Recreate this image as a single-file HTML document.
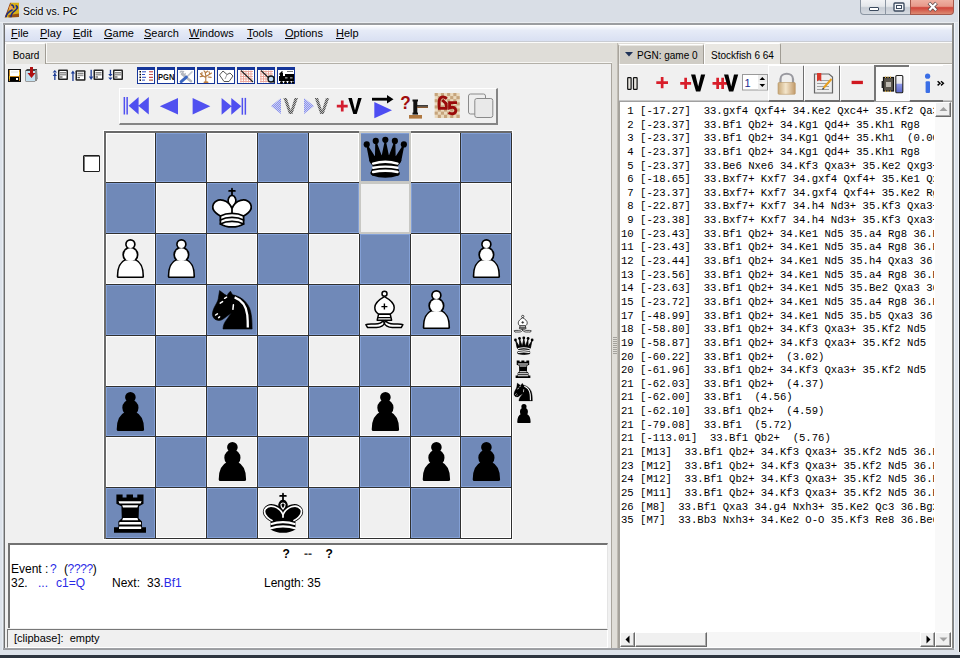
<!DOCTYPE html>
<html><head><meta charset="utf-8">
<style>
*{margin:0;padding:0;box-sizing:border-box}
html,body{width:960px;height:658px;overflow:hidden}
body{position:relative;background:#dde3eb;font-family:"Liberation Sans",sans-serif;font-size:11px;color:#000}
.a{position:absolute}
.pre{white-space:pre}
#title{left:0;top:0;width:960px;height:22px;background:#d9dee6}
#ttext{left:23px;top:5px;font-size:10.5px;color:#000;text-shadow:0 0 5px #fff,0 0 3px #fff}
.cb{top:0;height:15px;border:1px solid #8b95a2;border-top:none}
#bmin{left:860px;width:26px;border-radius:0 0 0 4px;background:linear-gradient(#f2f3f5 0,#e4e7eb 45%,#c6ccd4 55%,#d6dbe2 100%)}
#bmax{left:885px;width:26px;background:linear-gradient(#f2f3f5 0,#e4e7eb 45%,#c6ccd4 55%,#d6dbe2 100%)}
#bclose{left:910px;width:44px;border-radius:0 0 4px 0;background:linear-gradient(#eeb0a2 0,#e7998a 45%,#d0453a 55%,#dc8a72 100%);border-color:#a5584c}
#client{left:3px;top:23px;width:951px;height:627px;background:#dfddd8;border-style:solid;border-color:#9b9da0;border-width:2px 2px 1px 2px}
#menubar{left:5px;top:25px;width:947px;height:17px;background:linear-gradient(#fbfcfe 0,#e6ebf7 30%,#d9e0f2 100%);border-top:1px solid #fff;border-bottom:1px solid #c9ccd3}
.mi{top:27px;font-size:11px}
.mi u{text-decoration:underline;text-underline-offset:1px}
#lcontent{left:5px;top:63px;width:607px;height:585px;background:#f0f0f0;border-top:1px solid #b3b0a8;border-right:1px solid #a9a59d}
#rcontent{left:618px;top:63px;width:335px;height:585px;background:#f0f0f0;border-top:1px solid #b3b0a8;border-left:1px solid #a9a59d}
.tab{height:21px;font-size:10px;line-height:23px;text-align:center;border-top:1px solid #fff;border-left:1px solid #fff;border-right:1px solid #a09c94;border-radius:2px 2px 0 0}
#eng{left:620px;top:105px;width:313.5px;height:528px;font-family:"Liberation Mono",monospace;font-size:10.6px;line-height:13.64px;white-space:pre;overflow:hidden;padding:0 0 0 1px;color:#000}
.blue{color:#2a2ae6}
.sbb{background:#f0f0f0;border-style:solid;border-width:1px;border-color:#fff #6a6a6a #6a6a6a #fff;box-shadow:inset -1px -1px 0 #a8a8a8}
</style></head><body>
<div class="a" id="title"></div>
<div class="a" style="left:0;top:22px;width:960px;height:1px;background:#e9ecf0"></div>
<svg class="a" style="left:3px;top:1px" width="19" height="19" viewBox="3 1 19 19">
 <path d="M10.6 2.8 L19 2.8 L19 17 L5.2 17.6 Z" fill="#d6b018"/>
 <path d="M10.6 2.8 L5.2 17.6" stroke="#a04a18" stroke-width="1"/>
 <path d="M8.5 15 L19 13.5 L19 17 L8.5 17.6 Z" fill="#8a3a10" opacity=".8"/>
 <circle cx="11.3" cy="8.2" r="2.3" fill="#f0a850"/>
 <g fill="none" stroke="#1c2a80" stroke-width="1.5">
  <path d="M6 17.2 C6.4 14 8.3 11.8 12.6 9.8"/>
  <path d="M10.9 17.2 C11 14.5 12 12.5 15 10.6 C16.6 9.6 17.5 8.6 17.4 7"/>
  <path d="M11.2 5.2 C12.8 4.8 13.8 6 13.6 8.2"/>
  <path d="M15.6 5.6 C17 5.9 17.6 7 17.4 8.4"/>
 </g>
</svg>
<div class="a" id="ttext">Scid vs. PC</div>
<div class="a cb" id="bmin"><div class="a" style="left:8px;top:7px;width:10px;height:4px;border:1px solid #3b4a5e;border-radius:1px;background:#fff"></div></div>
<div class="a cb" id="bmax"><svg class="a" style="left:7px;top:2px" width="12" height="10"><rect x="1" y="1" width="10" height="8" rx="1" fill="#f4f6f8" stroke="#3b4a5e" stroke-width="1.3"/><rect x="3.5" y="3.5" width="5" height="3" fill="#fff" stroke="#3b4a5e" stroke-width="1"/></svg></div>
<div class="a cb" id="bclose"><svg class="a" style="left:16px;top:1px" width="12" height="12"><path d="M2 2 L9.5 9.5 M9.5 2 L2 9.5" stroke="#5a4a4a" stroke-width="3.8" stroke-linecap="butt"/><path d="M2.3 2.3 L9.2 9.2 M9.2 2.3 L2.3 9.2" stroke="#fff" stroke-width="2.2" stroke-linecap="butt"/></svg></div>
<div class="a" id="client"></div>
<div class="a" style="left:954px;top:23px;width:1px;height:626px;background:#f4f6f8"></div>
<div class="a" id="menubar"></div>
<div class="a" style="left:2px;top:23px;width:1px;height:627px;background:#e8edf4"></div><div class="a" style="left:3px;top:25px;width:1px;height:624px;background:#b2b6ba"></div><div class="a" style="left:4px;top:25px;width:1px;height:624px;background:#6e6e6e"></div>
<div class="a mi" style="left:11px"><u>F</u>ile</div>
<div class="a mi" style="left:40px"><u>P</u>lay</div>
<div class="a mi" style="left:73px"><u>E</u>dit</div>
<div class="a mi" style="left:104px"><u>G</u>ame</div>
<div class="a mi" style="left:144px"><u>S</u>earch</div>
<div class="a mi" style="left:189px"><u>W</u>indows</div>
<div class="a mi" style="left:247px"><u>T</u>ools</div>
<div class="a mi" style="left:285px"><u>O</u>ptions</div>
<div class="a mi" style="left:336px"><u>H</u>elp</div>

<!-- left notebook -->
<div class="a" style="left:5px;top:42px;width:947px;height:1px;background:#fbfbfa"></div>
<div class="a" style="left:46px;top:43px;width:566px;height:20px;border-left:1px solid #fafaf8;border-bottom:1px solid #f6f5f2"></div>
<div class="a" id="lcontent"></div>
<div class="a tab" style="left:5px;top:43px;width:41px;background:#e4e3df;padding-left:1px">Board</div>
<svg class="a" style="left:102px;top:129px" width="413" height="413" viewBox="102 129 413 413" shape-rendering="crispEdges">
<rect x="103" y="130" width="410" height="410" fill="#fff"/>
<rect x="104" y="131" width="408" height="408" fill="#303030"/>
<rect x="104" y="131" width="2" height="408" fill="#6a6a6a"/>
<rect x="104" y="131" width="408" height="2" fill="#6a6a6a"/>
<rect x="106" y="133" width="49" height="49" fill="#ffffff"/>
<rect x="107" y="134" width="47" height="47" fill="#f0f0f0"/>
<rect x="156" y="133" width="50" height="49" fill="#83a0d6"/>
<rect x="157" y="134" width="48" height="47" fill="#7089b8"/>
<rect x="207" y="133" width="50" height="49" fill="#ffffff"/>
<rect x="208" y="134" width="48" height="47" fill="#f0f0f0"/>
<rect x="258" y="133" width="50" height="49" fill="#83a0d6"/>
<rect x="259" y="134" width="48" height="47" fill="#7089b8"/>
<rect x="309" y="133" width="50" height="49" fill="#ffffff"/>
<rect x="310" y="134" width="48" height="47" fill="#f0f0f0"/>
<rect x="360" y="133" width="50" height="49" fill="#83a0d6"/>
<rect x="361" y="134" width="48" height="47" fill="#7089b8"/>
<rect x="411" y="133" width="49" height="49" fill="#ffffff"/>
<rect x="412" y="134" width="47" height="47" fill="#f0f0f0"/>
<rect x="461" y="133" width="50" height="49" fill="#83a0d6"/>
<rect x="462" y="134" width="48" height="47" fill="#7089b8"/>
<rect x="106" y="183" width="49" height="50" fill="#83a0d6"/>
<rect x="107" y="184" width="47" height="48" fill="#7089b8"/>
<rect x="156" y="183" width="50" height="50" fill="#ffffff"/>
<rect x="157" y="184" width="48" height="48" fill="#f0f0f0"/>
<rect x="207" y="183" width="50" height="50" fill="#83a0d6"/>
<rect x="208" y="184" width="48" height="48" fill="#7089b8"/>
<rect x="258" y="183" width="50" height="50" fill="#ffffff"/>
<rect x="259" y="184" width="48" height="48" fill="#f0f0f0"/>
<rect x="309" y="183" width="50" height="50" fill="#83a0d6"/>
<rect x="310" y="184" width="48" height="48" fill="#7089b8"/>
<rect x="360" y="183" width="50" height="50" fill="#ffffff"/>
<rect x="361" y="184" width="48" height="48" fill="#f0f0f0"/>
<rect x="411" y="183" width="49" height="50" fill="#83a0d6"/>
<rect x="412" y="184" width="47" height="48" fill="#7089b8"/>
<rect x="461" y="183" width="50" height="50" fill="#ffffff"/>
<rect x="462" y="184" width="48" height="48" fill="#f0f0f0"/>
<rect x="106" y="234" width="49" height="50" fill="#ffffff"/>
<rect x="107" y="235" width="47" height="48" fill="#f0f0f0"/>
<rect x="156" y="234" width="50" height="50" fill="#83a0d6"/>
<rect x="157" y="235" width="48" height="48" fill="#7089b8"/>
<rect x="207" y="234" width="50" height="50" fill="#ffffff"/>
<rect x="208" y="235" width="48" height="48" fill="#f0f0f0"/>
<rect x="258" y="234" width="50" height="50" fill="#83a0d6"/>
<rect x="259" y="235" width="48" height="48" fill="#7089b8"/>
<rect x="309" y="234" width="50" height="50" fill="#ffffff"/>
<rect x="310" y="235" width="48" height="48" fill="#f0f0f0"/>
<rect x="360" y="234" width="50" height="50" fill="#83a0d6"/>
<rect x="361" y="235" width="48" height="48" fill="#7089b8"/>
<rect x="411" y="234" width="49" height="50" fill="#ffffff"/>
<rect x="412" y="235" width="47" height="48" fill="#f0f0f0"/>
<rect x="461" y="234" width="50" height="50" fill="#83a0d6"/>
<rect x="462" y="235" width="48" height="48" fill="#7089b8"/>
<rect x="106" y="285" width="49" height="50" fill="#83a0d6"/>
<rect x="107" y="286" width="47" height="48" fill="#7089b8"/>
<rect x="156" y="285" width="50" height="50" fill="#ffffff"/>
<rect x="157" y="286" width="48" height="48" fill="#f0f0f0"/>
<rect x="207" y="285" width="50" height="50" fill="#83a0d6"/>
<rect x="208" y="286" width="48" height="48" fill="#7089b8"/>
<rect x="258" y="285" width="50" height="50" fill="#ffffff"/>
<rect x="259" y="286" width="48" height="48" fill="#f0f0f0"/>
<rect x="309" y="285" width="50" height="50" fill="#83a0d6"/>
<rect x="310" y="286" width="48" height="48" fill="#7089b8"/>
<rect x="360" y="285" width="50" height="50" fill="#ffffff"/>
<rect x="361" y="286" width="48" height="48" fill="#f0f0f0"/>
<rect x="411" y="285" width="49" height="50" fill="#83a0d6"/>
<rect x="412" y="286" width="47" height="48" fill="#7089b8"/>
<rect x="461" y="285" width="50" height="50" fill="#ffffff"/>
<rect x="462" y="286" width="48" height="48" fill="#f0f0f0"/>
<rect x="106" y="336" width="49" height="50" fill="#ffffff"/>
<rect x="107" y="337" width="47" height="48" fill="#f0f0f0"/>
<rect x="156" y="336" width="50" height="50" fill="#83a0d6"/>
<rect x="157" y="337" width="48" height="48" fill="#7089b8"/>
<rect x="207" y="336" width="50" height="50" fill="#ffffff"/>
<rect x="208" y="337" width="48" height="48" fill="#f0f0f0"/>
<rect x="258" y="336" width="50" height="50" fill="#83a0d6"/>
<rect x="259" y="337" width="48" height="48" fill="#7089b8"/>
<rect x="309" y="336" width="50" height="50" fill="#ffffff"/>
<rect x="310" y="337" width="48" height="48" fill="#f0f0f0"/>
<rect x="360" y="336" width="50" height="50" fill="#83a0d6"/>
<rect x="361" y="337" width="48" height="48" fill="#7089b8"/>
<rect x="411" y="336" width="49" height="50" fill="#ffffff"/>
<rect x="412" y="337" width="47" height="48" fill="#f0f0f0"/>
<rect x="461" y="336" width="50" height="50" fill="#83a0d6"/>
<rect x="462" y="337" width="48" height="48" fill="#7089b8"/>
<rect x="106" y="387" width="49" height="49" fill="#83a0d6"/>
<rect x="107" y="388" width="47" height="47" fill="#7089b8"/>
<rect x="156" y="387" width="50" height="49" fill="#ffffff"/>
<rect x="157" y="388" width="48" height="47" fill="#f0f0f0"/>
<rect x="207" y="387" width="50" height="49" fill="#83a0d6"/>
<rect x="208" y="388" width="48" height="47" fill="#7089b8"/>
<rect x="258" y="387" width="50" height="49" fill="#ffffff"/>
<rect x="259" y="388" width="48" height="47" fill="#f0f0f0"/>
<rect x="309" y="387" width="50" height="49" fill="#83a0d6"/>
<rect x="310" y="388" width="48" height="47" fill="#7089b8"/>
<rect x="360" y="387" width="50" height="49" fill="#ffffff"/>
<rect x="361" y="388" width="48" height="47" fill="#f0f0f0"/>
<rect x="411" y="387" width="49" height="49" fill="#83a0d6"/>
<rect x="412" y="388" width="47" height="47" fill="#7089b8"/>
<rect x="461" y="387" width="50" height="49" fill="#ffffff"/>
<rect x="462" y="388" width="48" height="47" fill="#f0f0f0"/>
<rect x="106" y="437" width="49" height="50" fill="#ffffff"/>
<rect x="107" y="438" width="47" height="48" fill="#f0f0f0"/>
<rect x="156" y="437" width="50" height="50" fill="#83a0d6"/>
<rect x="157" y="438" width="48" height="48" fill="#7089b8"/>
<rect x="207" y="437" width="50" height="50" fill="#ffffff"/>
<rect x="208" y="438" width="48" height="48" fill="#f0f0f0"/>
<rect x="258" y="437" width="50" height="50" fill="#83a0d6"/>
<rect x="259" y="438" width="48" height="48" fill="#7089b8"/>
<rect x="309" y="437" width="50" height="50" fill="#ffffff"/>
<rect x="310" y="438" width="48" height="48" fill="#f0f0f0"/>
<rect x="360" y="437" width="50" height="50" fill="#83a0d6"/>
<rect x="361" y="438" width="48" height="48" fill="#7089b8"/>
<rect x="411" y="437" width="49" height="50" fill="#ffffff"/>
<rect x="412" y="438" width="47" height="48" fill="#f0f0f0"/>
<rect x="461" y="437" width="50" height="50" fill="#83a0d6"/>
<rect x="462" y="438" width="48" height="48" fill="#7089b8"/>
<rect x="106" y="488" width="49" height="50" fill="#83a0d6"/>
<rect x="107" y="489" width="47" height="48" fill="#7089b8"/>
<rect x="156" y="488" width="50" height="50" fill="#ffffff"/>
<rect x="157" y="489" width="48" height="48" fill="#f0f0f0"/>
<rect x="207" y="488" width="50" height="50" fill="#83a0d6"/>
<rect x="208" y="489" width="48" height="48" fill="#7089b8"/>
<rect x="258" y="488" width="50" height="50" fill="#ffffff"/>
<rect x="259" y="489" width="48" height="48" fill="#f0f0f0"/>
<rect x="309" y="488" width="50" height="50" fill="#83a0d6"/>
<rect x="310" y="489" width="48" height="48" fill="#7089b8"/>
<rect x="360" y="488" width="50" height="50" fill="#ffffff"/>
<rect x="361" y="489" width="48" height="48" fill="#f0f0f0"/>
<rect x="411" y="488" width="49" height="50" fill="#83a0d6"/>
<rect x="412" y="489" width="47" height="48" fill="#7089b8"/>
<rect x="461" y="488" width="50" height="50" fill="#ffffff"/>
<rect x="462" y="489" width="48" height="48" fill="#f0f0f0"/>
<path d="M359 131h52v52h-52z M361 133v48h48v-48z" fill="#c8c8c4" fill-rule="evenodd"/>
<path d="M359 182h52v52h-52z M361 184v48h48v-48z" fill="#c8c8c4" fill-rule="evenodd"/>
</svg>
<svg class="a" style="left:359px;top:131px" width="51" height="51" viewBox="0 0 51 51"><g transform="translate(1.0 -0.3) scale(1.125 1.14)"><g fill-rule="evenodd" stroke="#000" stroke-linecap="round" stroke-linejoin="round" stroke-width="1.5"><g stroke="none"><circle cx="6" cy="12" r="2.75"/><circle cx="14" cy="9" r="2.75"/><circle cx="22.5" cy="8" r="2.75"/><circle cx="31" cy="9" r="2.75"/><circle cx="39" cy="12" r="2.75"/></g><path stroke-linecap="butt" d="M9 26c8.5-1.5 21-1.5 27 0l2.5-12.5L31 25l-.3-14.1-5.2 13.6-3-14.5-3 14.5-5.2-13.6L14 25 6.5 13.5 9 26z"/><path stroke-linecap="butt" d="M9 26c0 2 1.5 2 2.5 4 1 1.5 1 1 .5 3.5-1.5 1-1.5 2.5-1.5 2.5-1.5 1.5.5 2.5.5 2.5 6.5 1 16.5 1 23 0 0 0 1.5-1 0-2.5 0 0 .5-1.5-1-2.5-.5-2.5-.5-2 .5-3.5 1-2 2.5-2 2.5-4-8.5-1.5-18.5-1.5-27 0z"/><path fill="none" stroke-linecap="butt" d="M11 38.5a35 35 1 0 0 23 0"/><path fill="none" stroke="#fff" d="M11.6 28.8a40 40 0 0 1 21.8 0M11.8 32.5a60 60 0 0 1 21.4 0M11.6 36.2a60 60 0 0 1 21.8 0" stroke-width="2.1"/></g></g></svg>
<svg class="a" style="left:206px;top:182px" width="51" height="51" viewBox="0 0 51 51"><g transform="translate(-0.1 -0.2) scale(1.16 1.14)"><g fill="none" fill-rule="evenodd" stroke="#000" stroke-linecap="round" stroke-linejoin="round" stroke-width="1.5"><path stroke-linejoin="miter" d="M22.5 11.63V6M20 8h5"/><path fill="#fff" stroke-linecap="butt" stroke-linejoin="miter" d="M22.5 25s4.5-7.5 3-10.5c0 0-1-2.5-3-2.5s-3 2.5-3 2.5c-1.5 3 3 10.5 3 10.5"/><path fill="#fff" d="M12.5 37c5.5 3.5 14.5 3.5 20 0v-7s9-4.5 6-10.5c-4-6.5-13.5-3.5-16 4V27v-3.5c-2.5-7.5-12-10.5-16-4-3 6 6 10.5 6 10.5v7"/><path d="M12.5 30c5.5-3 14.5-3 20 0m-20 3.5c5.5-3 14.5-3 20 0m-20 3.5c5.5-3 14.5-3 20 0"/></g></g></svg>
<svg class="a" style="left:104px;top:233px" width="51" height="51" viewBox="0 0 51 51"><g stroke="#000" stroke-width="3.4" stroke-linejoin="round"><circle cx="26.4" cy="11.3" r="3.6"/><circle cx="26.4" cy="21.7" r="6.4"/><path d="M21.8 27.6 C15.8 30.2 14.4 36 14.4 43.4 H38.4 C38.4 36 37 30.2 31 27.6 Z"/></g><g fill="#fff"><circle cx="26.4" cy="11.3" r="3.6"/><circle cx="26.4" cy="21.7" r="6.4"/><path d="M21.8 27.6 C15.8 30.2 14.4 36 14.4 43.4 H38.4 C38.4 36 37 30.2 31 27.6 Z"/></g></svg>
<svg class="a" style="left:155px;top:233px" width="51" height="51" viewBox="0 0 51 51"><g stroke="#000" stroke-width="3.4" stroke-linejoin="round"><circle cx="26.4" cy="11.3" r="3.6"/><circle cx="26.4" cy="21.7" r="6.4"/><path d="M21.8 27.6 C15.8 30.2 14.4 36 14.4 43.4 H38.4 C38.4 36 37 30.2 31 27.6 Z"/></g><g fill="#fff"><circle cx="26.4" cy="11.3" r="3.6"/><circle cx="26.4" cy="21.7" r="6.4"/><path d="M21.8 27.6 C15.8 30.2 14.4 36 14.4 43.4 H38.4 C38.4 36 37 30.2 31 27.6 Z"/></g></svg>
<svg class="a" style="left:460px;top:233px" width="51" height="51" viewBox="0 0 51 51"><g stroke="#000" stroke-width="3.4" stroke-linejoin="round"><circle cx="26.4" cy="11.3" r="3.6"/><circle cx="26.4" cy="21.7" r="6.4"/><path d="M21.8 27.6 C15.8 30.2 14.4 36 14.4 43.4 H38.4 C38.4 36 37 30.2 31 27.6 Z"/></g><g fill="#fff"><circle cx="26.4" cy="11.3" r="3.6"/><circle cx="26.4" cy="21.7" r="6.4"/><path d="M21.8 27.6 C15.8 30.2 14.4 36 14.4 43.4 H38.4 C38.4 36 37 30.2 31 27.6 Z"/></g></svg>
<svg class="a" style="left:206px;top:284px" width="51" height="51" viewBox="0 0 51 51"><path d="M13.6 6.6 L18.5 10.3 L21 11.8 L22.3 9.5 L24.4 7.2 L26.6 10.8 C33 12 40 16 43.5 24 C45.6 29.5 46.1 36 46.1 45 H17 C17 41.5 18.5 38 21.5 34.5 L25.4 29 C21.5 31.5 18.5 34.5 15.8 35.8 C14 36.6 12.4 36.6 10.5 36 C8.3 35.3 6.6 33 6.4 30.5 C6.3 28 7.6 24.5 9.3 21.5 C10.6 19 12 17 12.3 14.5 Z" fill="#000" stroke="#000" stroke-width=".6" stroke-linejoin="round"/><path d="M28.6 13.4 C35.5 16 40.4 22.5 41.3 31 C41.7 35 41.8 39.5 41.8 43.6" fill="none" stroke="#fff" stroke-width="2.3"/><g stroke="#fff" stroke-width="1.5" stroke-linecap="round" fill="none"><path d="M18.6 14.3 L20.6 13.2"/><path d="M14.2 19.2 L16.6 17.6"/><path d="M9.6 31 L11.4 29.8"/><path d="M12.6 33.6 L13.6 32.8"/><path d="M27.4 20.8 L26.9 25.3"/></g></svg>
<svg class="a" style="left:359px;top:284px" width="51" height="51" viewBox="0 0 51 51"><g transform="translate(-1 0)"><g fill="#fff" stroke="#000" stroke-width="1.5" stroke-linejoin="round"><circle cx="26.5" cy="9.7" r="2.5"/><path d="M26.4 12.6 C21 15.6 16.8 19.2 16.8 23.6 C16.8 26.8 18.4 28.9 20.6 30.2 H32.2 C34.4 28.9 36.2 26.8 36.2 23.6 C36.2 19.2 32 15.6 26.4 12.6 Z"/><path d="M20.6 30.2 H32.2 L33.6 36.2 H19.2 Z"/><path d="M25 36.6 C23.5 39.5 21 40 17 40 C13 40 10 39.6 7.9 40.6 L9.6 43.6 C12 43.1 15 43.6 18.5 43.5 C22.5 43.3 25.5 42 26.6 39 Z"/><path d="M27.8 36.6 C29.3 39.5 31.8 40 35.8 40 C39.8 40 42.8 39.6 44.9 40.6 L43.2 43.6 C40.8 43.1 37.8 43.6 34.3 43.5 C30.3 43.3 27.3 42 26.2 39 Z"/></g><path d="M26.4 19.6 V25.6 M23.4 22.6 H29.4 M19.9 33.6 H32.9" stroke="#000" stroke-width="1.4" fill="none"/></g></svg>
<svg class="a" style="left:410px;top:284px" width="51" height="51" viewBox="0 0 51 51"><g stroke="#000" stroke-width="3.4" stroke-linejoin="round"><circle cx="26.4" cy="11.3" r="3.6"/><circle cx="26.4" cy="21.7" r="6.4"/><path d="M21.8 27.6 C15.8 30.2 14.4 36 14.4 43.4 H38.4 C38.4 36 37 30.2 31 27.6 Z"/></g><g fill="#fff"><circle cx="26.4" cy="11.3" r="3.6"/><circle cx="26.4" cy="21.7" r="6.4"/><path d="M21.8 27.6 C15.8 30.2 14.4 36 14.4 43.4 H38.4 C38.4 36 37 30.2 31 27.6 Z"/></g></svg>
<svg class="a" style="left:104px;top:386px" width="51" height="51" viewBox="0 0 51 51"><g stroke="#000" stroke-width="3.4" stroke-linejoin="round" fill="#000"><circle cx="26.4" cy="11.3" r="3.6"/><circle cx="26.4" cy="21.7" r="6.4"/><path d="M21.8 27.6 C15.8 30.2 14.4 36 14.4 43.4 H38.4 C38.4 36 37 30.2 31 27.6 Z"/></g></svg>
<svg class="a" style="left:359px;top:386px" width="51" height="51" viewBox="0 0 51 51"><g stroke="#000" stroke-width="3.4" stroke-linejoin="round" fill="#000"><circle cx="26.4" cy="11.3" r="3.6"/><circle cx="26.4" cy="21.7" r="6.4"/><path d="M21.8 27.6 C15.8 30.2 14.4 36 14.4 43.4 H38.4 C38.4 36 37 30.2 31 27.6 Z"/></g></svg>
<svg class="a" style="left:206px;top:436px" width="51" height="51" viewBox="0 0 51 51"><g stroke="#000" stroke-width="3.4" stroke-linejoin="round" fill="#000"><circle cx="26.4" cy="11.3" r="3.6"/><circle cx="26.4" cy="21.7" r="6.4"/><path d="M21.8 27.6 C15.8 30.2 14.4 36 14.4 43.4 H38.4 C38.4 36 37 30.2 31 27.6 Z"/></g></svg>
<svg class="a" style="left:410px;top:436px" width="51" height="51" viewBox="0 0 51 51"><g stroke="#000" stroke-width="3.4" stroke-linejoin="round" fill="#000"><circle cx="26.4" cy="11.3" r="3.6"/><circle cx="26.4" cy="21.7" r="6.4"/><path d="M21.8 27.6 C15.8 30.2 14.4 36 14.4 43.4 H38.4 C38.4 36 37 30.2 31 27.6 Z"/></g></svg>
<svg class="a" style="left:460px;top:436px" width="51" height="51" viewBox="0 0 51 51"><g stroke="#000" stroke-width="3.4" stroke-linejoin="round" fill="#000"><circle cx="26.4" cy="11.3" r="3.6"/><circle cx="26.4" cy="21.7" r="6.4"/><path d="M21.8 27.6 C15.8 30.2 14.4 36 14.4 43.4 H38.4 C38.4 36 37 30.2 31 27.6 Z"/></g></svg>
<svg class="a" style="left:104px;top:487px" width="51" height="51" viewBox="0 0 51 51"><path d="M12.4 7.4 H18.6 V10.5 H22.5 V7.4 H29 V10.5 H33.3 V7.4 H39.5 V16.8 L35 19.2 L34.6 31.2 L38 34.6 V40.2 H42 V45.7 H10 V40.2 H14.4 V34.6 L17.8 31.2 L17.4 19.2 L12.4 16.8 Z" fill="#000"/><g fill="#fff"><path d="M14.5 14.2 H37.6 L36.6 16.4 H15.5Z"/><path d="M18.2 18.3 H34.2 L33.4 20.5 H19Z"/><path d="M19 31.1 H33.4 L34.2 33.3 H18.2Z"/><path d="M15.5 35.1 H36.8 L37.2 37.4 H15.1Z"/><rect x="15" y="39.6" width="22.2" height="2.4" rx=".6"/></g></svg>
<svg class="a" style="left:257px;top:487px" width="51" height="51" viewBox="0 0 51 51"><g transform="translate(-0.1 -0.2) scale(1.16 1.14)"><g fill="none" fill-rule="evenodd" stroke="#000" stroke-linecap="round" stroke-linejoin="round" stroke-width="1.5"><path stroke-linejoin="miter" d="M22.5 11.63V6"/><path fill="#000" stroke-linecap="butt" stroke-linejoin="miter" d="M22.5 25s4.5-7.5 3-10.5c0 0-1-2.5-3-2.5s-3 2.5-3 2.5c-1.5 3 3 10.5 3 10.5"/><path fill="#000" d="M12.5 37c5.5 3.5 14.5 3.5 20 0v-7s9-4.5 6-10.5c-4-6.5-13.5-3.5-16 4V27v-3.5c-2.5-7.5-12-10.5-16-4-3 6 6 10.5 6 10.5v7"/><path stroke-linejoin="miter" d="M20 8h5"/><path stroke="#fff" d="M32 29.5s8.5-4 6.03-9.65C34.15 14 25 18 22.5 24.5v2.1-2.1C20 18 10.85 14 6.97 19.85 4.5 25.5 13 29.5 13 29.5"/><path stroke="#fff" stroke-width="1.9" d="M12.6 32.6c5.5-2.2 14.3-2.2 19.8 0M12.2 36.4c5.5-2.2 15.1-2.2 20.6 0"/><path fill="none" stroke="#fff" stroke-width="1" d="M22.5 19.6C21.2 18 20.5 16.6 20.7 15.5C20.9 14.6 21.6 14.2 22.5 14.2C23.4 14.2 24.1 14.6 24.3 15.5C24.5 16.6 23.8 18 22.5 19.6Z"/></g></g></svg>
<svg class="a" style="left:511.4px;top:312.2px" width="23.5" height="23.5" viewBox="0 0 51 51"><g transform="translate(-1 0)"><g fill="#fff" stroke="#000" stroke-width="1.5" stroke-linejoin="round"><circle cx="26.5" cy="9.7" r="2.5"/><path d="M26.4 12.6 C21 15.6 16.8 19.2 16.8 23.6 C16.8 26.8 18.4 28.9 20.6 30.2 H32.2 C34.4 28.9 36.2 26.8 36.2 23.6 C36.2 19.2 32 15.6 26.4 12.6 Z"/><path d="M20.6 30.2 H32.2 L33.6 36.2 H19.2 Z"/><path d="M25 36.6 C23.5 39.5 21 40 17 40 C13 40 10 39.6 7.9 40.6 L9.6 43.6 C12 43.1 15 43.6 18.5 43.5 C22.5 43.3 25.5 42 26.6 39 Z"/><path d="M27.8 36.6 C29.3 39.5 31.8 40 35.8 40 C39.8 40 42.8 39.6 44.9 40.6 L43.2 43.6 C40.8 43.1 37.8 43.6 34.3 43.5 C30.3 43.3 27.3 42 26.2 39 Z"/></g><path d="M26.4 19.6 V25.6 M23.4 22.6 H29.4 M19.9 33.6 H32.9" stroke="#000" stroke-width="1.4" fill="none"/></g></svg>
<svg class="a" style="left:511.7px;top:334.4px" width="22.9" height="22.9" viewBox="0 0 51 51"><g transform="translate(1.0 -0.3) scale(1.125 1.14)"><g fill-rule="evenodd" stroke="#000" stroke-linecap="round" stroke-linejoin="round" stroke-width="1.5"><g stroke="none"><circle cx="6" cy="12" r="2.75"/><circle cx="14" cy="9" r="2.75"/><circle cx="22.5" cy="8" r="2.75"/><circle cx="31" cy="9" r="2.75"/><circle cx="39" cy="12" r="2.75"/></g><path stroke-linecap="butt" d="M9 26c8.5-1.5 21-1.5 27 0l2.5-12.5L31 25l-.3-14.1-5.2 13.6-3-14.5-3 14.5-5.2-13.6L14 25 6.5 13.5 9 26z"/><path stroke-linecap="butt" d="M9 26c0 2 1.5 2 2.5 4 1 1.5 1 1 .5 3.5-1.5 1-1.5 2.5-1.5 2.5-1.5 1.5.5 2.5.5 2.5 6.5 1 16.5 1 23 0 0 0 1.5-1 0-2.5 0 0 .5-1.5-1-2.5-.5-2.5-.5-2 .5-3.5 1-2 2.5-2 2.5-4-8.5-1.5-18.5-1.5-27 0z"/><path fill="none" stroke-linecap="butt" d="M11 38.5a35 35 1 0 0 23 0"/><path fill="none" stroke="#fff" d="M11.6 28.8a40 40 0 0 1 21.8 0M11.8 32.5a60 60 0 0 1 21.4 0M11.6 36.2a60 60 0 0 1 21.8 0" stroke-width="2.1"/></g></g></svg>
<svg class="a" style="left:511.4px;top:356.7px" width="23.5" height="23.5" viewBox="0 0 51 51"><path d="M12.4 7.4 H18.6 V10.5 H22.5 V7.4 H29 V10.5 H33.3 V7.4 H39.5 V16.8 L35 19.2 L34.6 31.2 L38 34.6 V40.2 H42 V45.7 H10 V40.2 H14.4 V34.6 L17.8 31.2 L17.4 19.2 L12.4 16.8 Z" fill="#000"/><g fill="#fff"><path d="M14.5 14.2 H37.6 L36.6 16.4 H15.5Z"/><path d="M18.2 18.3 H34.2 L33.4 20.5 H19Z"/><path d="M19 31.1 H33.4 L34.2 33.3 H18.2Z"/><path d="M15.5 35.1 H36.8 L37.2 37.4 H15.1Z"/><rect x="15" y="39.6" width="22.2" height="2.4" rx=".6"/></g></svg>
<svg class="a" style="left:511.3px;top:379.8px" width="23.7" height="23.7" viewBox="0 0 51 51"><path d="M13.6 6.6 L18.5 10.3 L21 11.8 L22.3 9.5 L24.4 7.2 L26.6 10.8 C33 12 40 16 43.5 24 C45.6 29.5 46.1 36 46.1 45 H17 C17 41.5 18.5 38 21.5 34.5 L25.4 29 C21.5 31.5 18.5 34.5 15.8 35.8 C14 36.6 12.4 36.6 10.5 36 C8.3 35.3 6.6 33 6.4 30.5 C6.3 28 7.6 24.5 9.3 21.5 C10.6 19 12 17 12.3 14.5 Z" fill="#000" stroke="#000" stroke-width=".6" stroke-linejoin="round"/><path d="M28.6 13.4 C35.5 16 40.4 22.5 41.3 31 C41.7 35 41.8 39.5 41.8 43.6" fill="none" stroke="#fff" stroke-width="2.3"/><g stroke="#fff" stroke-width="1.5" stroke-linecap="round" fill="none"><path d="M18.6 14.3 L20.6 13.2"/><path d="M14.2 19.2 L16.6 17.6"/><path d="M9.6 31 L11.4 29.8"/><path d="M12.6 33.6 L13.6 32.8"/><path d="M27.4 20.8 L26.9 25.3"/></g></svg>
<svg class="a" style="left:510.7px;top:400.5px" width="25.0" height="25.0" viewBox="0 0 51 51"><g stroke="#000" stroke-width="3.4" stroke-linejoin="round" fill="#000"><circle cx="26.4" cy="11.3" r="3.6"/><circle cx="26.4" cy="21.7" r="6.4"/><path d="M21.8 27.6 C15.8 30.2 14.4 36 14.4 43.4 H38.4 C38.4 36 37 30.2 31 27.6 Z"/></g></svg>
<div class="a" style="left:83px;top:155px;width:17px;height:17px;background:#fff;border:1px solid #1e1e1e;border-radius:1px;box-shadow:inset 1px 1px 0 #777"></div>
<!-- info panel -->
<div class="a" style="left:8px;top:543px;width:600px;height:85px;background:#fff;border-left:2px solid #727272;border-top:2px solid #727272;border-right:1px solid #e4e4e4"></div>
<div class="a pre" style="left:282.5px;top:547px;font-weight:bold;font-size:12px">?</div><div class="a pre" style="left:304px;top:546.8px;font-size:12px;color:#444;font-weight:bold">--</div><div class="a pre" style="left:325.5px;top:547px;font-weight:bold;font-size:12px">?</div>
<div class="a pre" style="left:11px;top:562px;font-size:12px">Event :</div><div class="a pre blue" style="left:50px;top:562px;font-size:12px">?</div><div class="a pre" style="left:64px;top:562px;font-size:12px;letter-spacing:-0.4px">(<span class="blue">????</span>)</div>
<div class="a pre" style="left:11px;top:576px;font-size:12px">32.</div>
<div class="a pre blue" style="left:38px;top:576px;font-size:12px">...</div>
<div class="a pre blue" style="left:56px;top:576px;font-size:12px">c1=Q</div>
<div class="a pre" style="left:112px;top:576px;font-size:12px">Next:</div>
<div class="a pre" style="left:147px;top:576px;font-size:12px">33.<span class="blue">Bf1</span></div>
<div class="a pre" style="left:264px;top:576px;font-size:12px">Length: 35</div>
<!-- status bar -->
<div class="a" style="left:7px;top:629px;width:601px;height:19px;border-left:1px solid #777;border-top:1px solid #777;border-right:1px solid #fff;border-bottom:1px solid #fff"></div>
<div class="a pre" style="left:14px;top:632px;font-size:11px">[clipbase]:  empty</div>

<!-- sash -->
<div class="a" style="left:612px;top:43px;width:6px;height:605px;background:#e0ded8;border-right:1px solid #c0bcb4"></div><div class="a" style="left:613px;top:337px;width:4px;height:1px;background:#a4a29c"></div><div class="a" style="left:613px;top:339px;width:4px;height:1px;background:#a4a29c"></div><div class="a" style="left:613px;top:341px;width:4px;height:1px;background:#a4a29c"></div><div class="a" style="left:613px;top:343px;width:4px;height:1px;background:#a4a29c"></div><div class="a" style="left:613px;top:345px;width:4px;height:1px;background:#a4a29c"></div><div class="a" style="left:613px;top:347px;width:4px;height:1px;background:#a4a29c"></div><div class="a" style="left:613px;top:349px;width:4px;height:1px;background:#a4a29c"></div><div class="a" style="left:613px;top:351px;width:4px;height:1px;background:#a4a29c"></div><div class="a" style="left:613px;top:353px;width:4px;height:1px;background:#a4a29c"></div>

<!-- right notebook -->
<div class="a" id="rcontent"></div>
<div class="a tab" style="left:618px;top:44px;width:86px;height:20px;background:#cfccc5;border-left-color:#a8a49c;box-shadow:inset 1px 1px 0 #e8e6e0;text-align:left;padding-left:18px;line-height:22px">PGN: game 0</div>
<svg class="a" style="left:625px;top:52px" width="9" height="6"><path d="M0 0H8L4 4.5Z" fill="#1f3258"/></svg>
<div class="a tab" style="left:704px;top:43px;width:77px;background:#e9e7e2">Stockfish 6 64</div>
<div class="a" style="left:618px;top:101px;width:335px;height:547px;background:#fff;border-left:2px solid #a5a29b;border-top:1px solid #a0a0a0"></div>
<div class="a" id="eng"> 1 [-17.27]  33.gxf4 Qxf4+ 34.Ke2 Qxc4+ 35.Kf2 Qa3
 2 [-23.37]  33.Bf1 Qb2+ 34.Kg1 Qd4+ 35.Kh1 Rg8
 3 [-23.37]  33.Bf1 Qb2+ 34.Kg1 Qd4+ 35.Kh1  (0.00
 4 [-23.37]  33.Bf1 Qb2+ 34.Kg1 Qd4+ 35.Kh1 Rg8
 5 [-23.37]  33.Be6 Nxe6 34.Kf3 Qxa3+ 35.Ke2 Qxg3+
 6 [-18.65]  33.Bxf7+ Kxf7 34.gxf4 Qxf4+ 35.Ke1 Qx
 7 [-23.37]  33.Bxf7+ Kxf7 34.gxf4 Qxf4+ 35.Ke2 Rg
 8 [-22.87]  33.Bxf7+ Kxf7 34.h4 Nd3+ 35.Kf3 Qxa3+
 9 [-23.38]  33.Bxf7+ Kxf7 34.h4 Nd3+ 35.Kf3 Qxa3+
10 [-23.43]  33.Bf1 Qb2+ 34.Ke1 Nd5 35.a4 Rg8 36.B
11 [-23.43]  33.Bf1 Qb2+ 34.Ke1 Nd5 35.a4 Rg8 36.B
12 [-23.44]  33.Bf1 Qb2+ 34.Ke1 Nd5 35.h4 Qxa3 36.
13 [-23.56]  33.Bf1 Qb2+ 34.Ke1 Nd5 35.a4 Rg8 36.B
14 [-23.63]  33.Bf1 Qb2+ 34.Ke1 Nd5 35.Be2 Qxa3 36
15 [-23.72]  33.Bf1 Qb2+ 34.Ke1 Nd5 35.a4 Rg8 36.B
17 [-48.99]  33.Bf1 Qb2+ 34.Ke1 Nd5 35.b5 Qxa3 36.
18 [-58.80]  33.Bf1 Qb2+ 34.Kf3 Qxa3+ 35.Kf2 Nd5
19 [-58.87]  33.Bf1 Qb2+ 34.Kf3 Qxa3+ 35.Kf2 Nd5
20 [-60.22]  33.Bf1 Qb2+  (3.02)
20 [-61.96]  33.Bf1 Qb2+ 34.Kf3 Qxa3+ 35.Kf2 Nd5
21 [-62.03]  33.Bf1 Qb2+  (4.37)
21 [-62.00]  33.Bf1  (4.56)
21 [-62.10]  33.Bf1 Qb2+  (4.59)
21 [-79.08]  33.Bf1  (5.72)
21 [-113.01]  33.Bf1 Qb2+  (5.76)
21 [M13]  33.Bf1 Qb2+ 34.Kf3 Qxa3+ 35.Kf2 Nd5 36.B
23 [M12]  33.Bf1 Qb2+ 34.Kf3 Qxa3+ 35.Kf2 Nd5 36.B
24 [M12]  33.Bf1 Qb2+ 34.Kf3 Qxa3+ 35.Kf2 Nd5 36.B
25 [M11]  33.Bf1 Qb2+ 34.Kf3 Qxa3+ 35.Kf2 Nd5 36.B
26 [M8]  33.Bf1 Qxa3 34.g4 Nxh3+ 35.Ke2 Qc3 36.Bg2
35 [M7]  33.Bb3 Nxh3+ 34.Ke2 O-O 35.Kf3 Re8 36.Be6</div>
<!-- v scrollbar -->
<div class="a" style="left:935px;top:102px;width:17px;height:530px;background:#f9f9f9"></div>
<div class="a sbb" style="left:935px;top:102px;width:16px;height:15px"></div>
<svg class="a" style="left:939px;top:106px" width="9" height="6"><path d="M0.5 5H8.5L4.5 1Z" fill="#a0a0a0"/></svg>
<div class="a sbb" style="left:935px;top:632px;width:16px;height:15px"></div>
<svg class="a" style="left:939px;top:637px" width="9" height="6"><path d="M0.5 0.5H8.5L4.5 4.5Z" fill="#a0a0a0"/></svg>
<!-- h scrollbar -->
<div class="a" style="left:620px;top:632px;width:315px;height:15px;background:#f6f6f6"></div>
<div class="a sbb" style="left:620px;top:632px;width:15px;height:15px"></div>
<svg class="a" style="left:625px;top:635px" width="5" height="9"><path d="M4.5 0.5V8.5L0.5 4.5Z" fill="#000"/></svg>
<div class="a sbb" style="left:635px;top:632px;width:72px;height:15px"></div>
<div class="a sbb" style="left:920px;top:632px;width:15px;height:15px"></div>
<svg class="a" style="left:926px;top:635px" width="5" height="9"><path d="M0.5 0.5V8.5L4.5 4.5Z" fill="#000"/></svg>
<!-- window edges -->
<div class="a" style="left:952px;top:23px;width:1px;height:626px;background:#8b8984"></div><div class="a" style="left:953px;top:23px;width:1px;height:626px;background:#7f858c"></div>
<div class="a" style="left:3px;top:648px;width:951px;height:1px;background:#a0a2a6"></div>
<div class="a" style="left:958px;top:0;width:1px;height:652px;background:#f2f4f7"></div><div class="a" style="left:959px;top:0;width:1px;height:652px;background:#222"></div>
<div class="a" style="left:0;top:655px;width:960px;height:3px;background:#2d3540"></div>
<!-- ===== left toolbar small icons ===== -->
<svg class="a" style="left:0;top:60px" width="130" height="30" viewBox="0 60 130 30">
 <!-- floppy -->
 <rect x="8" y="69" width="13" height="13" fill="#111"/>
 <rect x="9" y="70" width="11" height="11" fill="#c8861e"/>
 <rect x="10" y="70" width="9" height="6" fill="#fff"/>
 <rect x="11" y="71.5" width="7" height="1" fill="#ddd"/>
 <rect x="10" y="77" width="9" height="4" fill="#000"/>
 <rect x="16" y="78" width="2" height="2" fill="#fff"/>
 <rect x="9" y="76" width="1" height="3" fill="#f2c21a"/>
 <rect x="19" y="72" width="1" height="3" fill="#f2c21a"/>
 <!-- import -->
 <path d="M25.5 70.5 L27 69 L37 69 L37.5 79 L35 81.5 L25.5 81.5 Z" fill="#444"/>
 <rect x="26" y="71" width="9" height="10" fill="#c4e0ef"/>
 <rect x="35" y="70" width="2" height="11" fill="#888"/>
 <path d="M30 67 H33 V73 H35.5 L31.5 78 L27.5 73 H30 Z" fill="#b01010"/>
 <!-- move up/down icons -->
 <g>
  <rect x="58" y="69.5" width="10" height="10.5" rx="1" fill="#222"/>
  <rect x="59.5" y="71" width="7" height="7.5" fill="#fff"/>
  <rect x="60" y="72" width="6" height="1.5" fill="#888"/>
  <rect x="60" y="74" width="6" height="1.5" fill="#999"/>
  <rect x="60" y="76.5" width="2.5" height="1" fill="#333"/>
 </g>
 <g transform="translate(17.5 0.7)">
  <rect x="58" y="69.5" width="10" height="10.5" rx="1" fill="#222"/>
  <rect x="59.5" y="71" width="7" height="7.5" fill="#fff"/>
  <rect x="60" y="72" width="6" height="1.5" fill="#888"/>
  <rect x="60" y="74" width="6" height="1.5" fill="#999"/>
  <rect x="60" y="76.5" width="2.5" height="1" fill="#333"/>
 </g>
 <g transform="translate(35.5 0)">
  <rect x="58" y="69.5" width="10" height="10.5" rx="1" fill="#222"/>
  <rect x="59.5" y="71" width="7" height="7.5" fill="#fff"/>
  <rect x="60" y="72" width="6" height="1.5" fill="#888"/>
  <rect x="60" y="74" width="6" height="1.5" fill="#999"/>
  <rect x="60" y="76.5" width="2.5" height="1" fill="#333"/>
 </g>
 <g transform="translate(55 0)">
  <rect x="58" y="69.5" width="10" height="10.5" rx="1" fill="#222"/>
  <rect x="59.5" y="71" width="7" height="7.5" fill="#fff"/>
  <rect x="60" y="72" width="6" height="1.5" fill="#888"/>
  <rect x="60" y="74" width="6" height="1.5" fill="#999"/>
  <rect x="60" y="76.5" width="2.5" height="1" fill="#333"/>
 </g>
 <g fill="#1d3d96">
  <!-- double up -->
  <path d="M54.8 70 L57 72.5 H52.6Z M54.8 73.5 L57 76 H52.6Z"/><rect x="54.2" y="73" width="1.3" height="7"/>
  <!-- single up -->
  <path d="M72.9 70.5 L75 73.5 H70.8Z"/><rect x="72.3" y="73" width="1.3" height="8"/>
  <!-- single down -->
  <rect x="90.5" y="69.8" width="1.3" height="7"/><path d="M91.1 80 L93.3 76.5 H88.9Z"/>
  <!-- double down -->
  <rect x="109.8" y="69.8" width="1.3" height="6"/><path d="M110.4 76.5 L112.6 74 H108.2Z M110.4 80 L112.6 77.5 H108.2Z"/>
 </g>
</svg>
<!-- ===== 8 framed icons ===== -->
<svg class="a" style="left:130px;top:62px" width="170" height="26" viewBox="130 62 170 26">
 <defs>
  <g><rect x="0" y="0" width="18" height="17" fill="#16369a"/><rect x="1" y="3" width="16" height="13" fill="#fff"/></g>
 </defs>
 <g transform="translate(137 67)"><rect x="0" y="0" width="18" height="17" fill="#16369a"/><rect x="1" y="3" width="16" height="13" fill="#fff"/></g>
 <g transform="translate(157 67)"><rect x="0" y="0" width="18" height="17" fill="#16369a"/><rect x="1" y="3" width="16" height="13" fill="#fff"/></g>
 <g transform="translate(177 67)"><rect x="0" y="0" width="18" height="17" fill="#16369a"/><rect x="1" y="3" width="16" height="13" fill="#fff"/></g>
 <g transform="translate(197 67)"><rect x="0" y="0" width="18" height="17" fill="#16369a"/><rect x="1" y="3" width="16" height="13" fill="#fff"/></g>
 <g transform="translate(217 67)"><rect x="0" y="0" width="18" height="17" fill="#16369a"/><rect x="1" y="3" width="16" height="13" fill="#fff"/></g>
 <g transform="translate(237 67)"><rect x="0" y="0" width="18" height="17" fill="#16369a"/><rect x="1" y="3" width="16" height="13" fill="#fff"/></g>
 <g transform="translate(257 67)"><rect x="0" y="0" width="18" height="17" fill="#16369a"/><rect x="1" y="3" width="16" height="13" fill="#fff"/></g>
 <g transform="translate(277 67)"><rect x="0" y="0" width="18" height="17" fill="#16369a"/><rect x="1" y="3" width="16" height="13" fill="#fff"/></g>
 <!-- 1: list -->
 <g>
  <rect x="139.5" y="71" width="1.5" height="1.5" fill="#000"/><rect x="139.5" y="73.8" width="1.5" height="1.5" fill="#000"/><rect x="139.5" y="76.6" width="1.5" height="1.5" fill="#000"/><rect x="139.5" y="79.4" width="1.5" height="1.5" fill="#000"/>
  <rect x="142" y="71.3" width="4" height="1" fill="#2f4fc0"/><rect x="142" y="74" width="3" height="1" fill="#2f4fc0"/><rect x="142" y="76.8" width="4" height="1" fill="#2f4fc0"/><rect x="142" y="79.6" width="3" height="1" fill="#2f4fc0"/>
  <rect x="149" y="71.3" width="4" height="1" fill="#c03030"/><rect x="149" y="74" width="4" height="1" fill="#c05050"/><rect x="149" y="76.8" width="4" height="1" fill="#c02020"/><rect x="149" y="79.6" width="4" height="1" fill="#a03020"/>
 </g>
 <!-- 2: PGN -->
 <text x="158" y="79.5" font-family="Liberation Sans" font-weight="bold" font-size="8.6" fill="#111" textLength="16.4" lengthAdjust="spacingAndGlyphs">PGN</text>
 <!-- 3: tools -->
 <path d="M182 74 L191 81.2" stroke="#b4b8c0" stroke-width="2.6" stroke-linecap="round"/>
 <path d="M179.8 72.6 L181 71.2 L183.4 71.6 L182.6 73 L183.8 74.6 L185 74 L184.6 76" fill="none" stroke="#b4b8c0" stroke-width="1.4"/>
 <path d="M192 71.8 L186 77.6" stroke="#c4c8d0" stroke-width="1.6" stroke-linecap="round"/>
 <path d="M186.4 77.2 L181.2 81.6" stroke="#3a66c0" stroke-width="3" stroke-linecap="round"/>
 <!-- 4: tree -->
 <g stroke="#b47a40" stroke-width="1.1" fill="none" stroke-linecap="round">
  <path d="M205.8 82 V75.5 M205.8 77.5 L201.5 75 L200.5 73.5 M201.8 75.2 L202 72.4 M205.8 76.5 L210 74 L211.5 73 M209.6 74.2 L209 71.5 M205.8 75.6 L205 71.8 L204 70.8 M205.2 73 L207.5 71.2 M203.2 76.3 L200.2 76.6 M208.2 77 L211.2 77.4"/>
 </g>
 <ellipse cx="206" cy="82.2" rx="2.6" ry="0.9" fill="#c08040"/>
 <!-- 5: book -->
 <path d="M219.5 75 L223 71 L227 74.5 L230 73 L233 76 L229 81.5 L224 81.5 Z" fill="#fff" stroke="#555" stroke-width="1"/>
 <path d="M227 74.5 L225 79" stroke="#888" stroke-width=".8"/>
 <!-- 6,7: grids -->
 <g>
  <g fill="#e07a6a" opacity=".7">
   <rect x="240" y="71" width="13" height=".9"/><rect x="240" y="73.5" width="13" height=".9"/><rect x="240" y="76" width="13" height=".9"/><rect x="240" y="78.5" width="13" height=".9"/><rect x="240" y="81" width="13" height=".9"/>
   <rect x="240.5" y="70.5" width=".9" height="12"/><rect x="243" y="70.5" width=".9" height="12"/><rect x="245.5" y="70.5" width=".9" height="12"/><rect x="248" y="70.5" width=".9" height="12"/><rect x="250.5" y="70.5" width=".9" height="12"/>
  </g>
  <path d="M241 70.5 L253 82" stroke="#222" stroke-width="1.1"/>
 </g>
 <g transform="translate(20 0)">
  <g fill="#e07a6a" opacity=".7">
   <rect x="240" y="71" width="13" height=".9"/><rect x="240" y="73.5" width="13" height=".9"/><rect x="240" y="76" width="13" height=".9"/><rect x="240" y="78.5" width="13" height=".9"/><rect x="240" y="81" width="13" height=".9"/>
   <rect x="240.5" y="70.5" width=".9" height="12"/><rect x="243" y="70.5" width=".9" height="12"/><rect x="245.5" y="70.5" width=".9" height="12"/><rect x="248" y="70.5" width=".9" height="12"/><rect x="250.5" y="70.5" width=".9" height="12"/>
  </g>
  <path d="M241 70.5 L253 82" stroke="#222" stroke-width="1.1"/>
 </g>
 <circle cx="271" cy="79" r="3" fill="#bfdcf4" stroke="#111" stroke-width="1.3"/>
 <path d="M273 81 L274.5 82.5" stroke="#111" stroke-width="1.6"/>
 <!-- 8: train -->
 <g fill="#000">
  <rect x="279" y="76" width="15" height="5"/>
  <rect x="280" y="73" width="3" height="4"/>
  <rect x="285" y="74" width="9" height="3"/>
  <path d="M279 74 L282 71 L283 72 L280 75Z"/>
  <circle cx="281.5" cy="82.5" r="1.5"/><circle cx="285.5" cy="82.5" r="1.5"/><circle cx="289.5" cy="82.5" r="1.5"/><circle cx="293" cy="82.5" r="1.3"/>
 </g>
 <rect x="285" y="77.5" width="2.5" height=".8" fill="#fff"/><rect x="290" y="77.5" width="2.5" height=".8" fill="#fff"/>
 <rect x="287" y="71" width="6" height="1" fill="#777"/>
</svg>
<!-- ===== nav bar ===== -->
<div class="a" style="left:119px;top:88px;width:379px;height:37px;border-style:solid;border-width:1px 2px 2px 1px;border-color:#fff #858585 #858585 #fff"></div>
<svg class="a" style="left:118px;top:88px" width="390" height="35" viewBox="118 88 390 35">
 <defs>
  <pattern id="stip" width="2" height="2" patternUnits="userSpaceOnUse"><rect width="1" height="1" fill="#fff"/><rect x="1" y="1" width="1" height="1" fill="#fff"/></pattern>
 </defs>
 <g fill="#5050f0">
  <rect x="123.6" y="97" width="1.5" height="17.5"/><rect x="126.4" y="97" width="1.5" height="17.5"/>
  <path d="M128.6 105.8 L138.6 97 V114.5Z M138.3 105.8 L148.8 97 V114.5Z"/>
  <path d="M159.8 106.3 L178 98 V114.6Z"/>
  <path d="M192.6 98 L210.3 106.3 L192.6 114.6Z"/>
  <path d="M221.6 97.9 L231.6 106.3 L221.6 114.7Z M231.3 97.9 L241.3 106.3 L231.3 114.7Z"/>
  <rect x="241.6" y="97.9" width="1.5" height="16.8"/><rect x="244.6" y="97.9" width="1.5" height="16.8"/>
 </g>
 <!-- disabled -->
 <mask id="stm" maskUnits="userSpaceOnUse" x="260" y="90" width="80" height="30"><rect x="260" y="90" width="80" height="30" fill="url(#stip2)"/></mask>
 <pattern id="stip2" width="2" height="2" patternUnits="userSpaceOnUse"><rect width="2" height="2" fill="#fff"/><rect width="1" height="1" fill="#555"/><rect x="1" y="1" width="1" height="1" fill="#555"/></pattern>
 <g mask="url(#stm)">
  <path d="M271 106 L281 98 V114Z" fill="#8890f0"/>
  <path d="M283.5 98 H286.8 L290.7 110.2 L294.6 98 H297.9 L292.4 114.1 H289Z" fill="#555"/>
  <path d="M304 98 L314 106 L304 114Z" fill="#8890f0"/>
  <path d="M314.8 98 H318.1 L322 110.2 L325.9 98 H329.2 L323.7 114.1 H320.3Z" fill="#555"/>
 </g>
 <!-- +V -->
 <path d="M340.9 100.6 H343.6 V104.7 H347.7 V107.4 H343.6 V111.5 H340.9 V107.4 H336.8 V104.7 H340.9Z" fill="#d41e30"/>
 <path d="M348.3 98 H351.9 L355 110.2 L358.1 98 H361.7 L356.7 114.1 H353.3Z" fill="#000"/>
 <!-- arrow + play -->
 <rect x="372" y="97.8" width="17" height="2.8" fill="#000"/>
 <path d="M387 95 L393.5 99.2 L387 103.4Z" fill="#000"/>
 <path d="M374.3 102 L392 110.2 L374.3 118.3Z" fill="#4d4df2"/>
 <!-- ? gavel -->
 <text x="400.2" y="109.4" font-family="Liberation Sans" font-weight="bold" font-size="19" fill="#a00c0c" textLength="10.5" lengthAdjust="spacingAndGlyphs">?</text>
 <rect x="412.5" y="99.5" width="5.5" height="2" fill="#111"/>
 <rect x="413.3" y="101" width="4" height="12" fill="#111"/>
 <rect x="412.5" y="112.6" width="5.5" height="2" fill="#111"/>
 <rect x="417" y="105.2" width="11" height="1.5" fill="#111"/>
 <rect x="417" y="106.7" width="11" height="1.3" fill="#8a5a30"/>
 <rect x="409" y="115" width="13" height="3.6" fill="#b07840"/>
 <!-- flip -->
 <g>
  <rect x="434.7" y="93" width="25" height="25" fill="#ead9bd"/>
  <g fill="#c6a47c">
   <rect x="434.7" y="93" width="3.1" height="3.1"/><rect x="440.9" y="93" width="3.1" height="3.1"/><rect x="447.1" y="93" width="3.1" height="3.1"/><rect x="453.3" y="93" width="3.1" height="3.1"/>
   <rect x="437.8" y="96.1" width="3.1" height="3.1"/><rect x="444" y="96.1" width="3.1" height="3.1"/><rect x="450.2" y="96.1" width="3.1" height="3.1"/><rect x="456.4" y="96.1" width="3.3" height="3.1"/>
   <rect x="434.7" y="99.2" width="3.1" height="3.1"/><rect x="440.9" y="99.2" width="3.1" height="3.1"/><rect x="447.1" y="99.2" width="3.1" height="3.1"/><rect x="453.3" y="99.2" width="3.1" height="3.1"/>
   <rect x="437.8" y="102.3" width="3.1" height="3.1"/><rect x="444" y="102.3" width="3.1" height="3.1"/><rect x="450.2" y="102.3" width="3.1" height="3.1"/><rect x="456.4" y="102.3" width="3.3" height="3.1"/>
   <rect x="434.7" y="105.4" width="3.1" height="3.1"/><rect x="440.9" y="105.4" width="3.1" height="3.1"/><rect x="447.1" y="105.4" width="3.1" height="3.1"/><rect x="453.3" y="105.4" width="3.1" height="3.1"/>
   <rect x="437.8" y="108.5" width="3.1" height="3.1"/><rect x="444" y="108.5" width="3.1" height="3.1"/><rect x="450.2" y="108.5" width="3.1" height="3.1"/><rect x="456.4" y="108.5" width="3.3" height="3.1"/>
   <rect x="434.7" y="111.6" width="3.1" height="3.1"/><rect x="440.9" y="111.6" width="3.1" height="3.1"/><rect x="447.1" y="111.6" width="3.1" height="3.1"/><rect x="453.3" y="111.6" width="3.1" height="3.1"/>
   <rect x="437.8" y="114.7" width="3.1" height="3.3"/><rect x="444" y="114.7" width="3.1" height="3.3"/><rect x="450.2" y="114.7" width="3.1" height="3.3"/><rect x="456.4" y="114.7" width="3.3" height="3.3"/>
  </g>
  <g fill="none" stroke="#9a0a0a" stroke-width="2.9" stroke-linejoin="miter">
   <path d="M446.8 98.8 C443.5 95.8 439.8 96.6 439.2 100.8 C438.8 103.8 439 106.3 439.3 108.4 L446.2 108.4 L446.2 103.6 L442.3 100"/>
   <path d="M457 102.6 H449.6 V107.8 C453 106.4 455.8 107.6 455.8 110.6 C455.8 113.8 452 114.8 448.6 112.6"/>
  </g>
 </g>
 <!-- copy -->
 <rect x="468.5" y="94" width="17" height="20" rx="2" fill="#eee" stroke="#8a8a8a" stroke-width="1"/>
 <rect x="474.8" y="98.5" width="18" height="19" rx="2" fill="#e9e9e9" stroke="#8a8a8a" stroke-width="1"/>
</svg>
<!-- ===== right toolbar ===== -->
<div class="a" style="left:619px;top:64px;width:333px;height:37px;border-top:1px solid #fff;border-bottom:1px solid #c6c6c6"></div>
<div class="a" style="left:768px;top:65px;width:37px;height:37px;border-style:solid;border-width:1px 2px 2px 1px;border-color:#fff #6e6e6e #6e6e6e #fff"></div>
<div class="a" style="left:804px;top:65px;width:37px;height:37px;border-style:solid;border-width:1px 2px 2px 1px;border-color:#fff #6e6e6e #6e6e6e #fff"></div>
<div class="a" style="left:840px;top:65px;width:34px;height:37px;border-style:solid;border-width:1px 0 2px 1px;border-color:#fff #6e6e6e #6e6e6e #fff"></div>
<div class="a" style="left:874px;top:65px;width:35px;height:36px;background:#fbfbfb;border-style:solid;border-width:2px 0 0 2px;border-color:#777 #fff #fff #777"></div>
<div class="a" style="left:909px;top:65px;width:34px;height:37px;border-style:solid;border-width:1px 0 2px 1px;border-color:#fff #6e6e6e #6e6e6e #fff"></div>
<svg class="a" style="left:619px;top:64px" width="334" height="38" viewBox="619 64 334 38">
 <!-- pause -->
 <rect x="627.7" y="77.6" width="3.4" height="11.8" rx=".6" fill="#e8e6e0" stroke="#111" stroke-width="1.2"/>
 <rect x="633.5" y="77.6" width="3.6" height="11.8" rx=".6" fill="#e8e6e0" stroke="#111" stroke-width="1.2"/>
 <!-- + -->
 <path d="M660.8 77 H663.5 V81.2 H668 V83.9 H663.5 V88.2 H660.8 V83.9 H656.3 V81.2 H660.8Z" fill="#d81e2a"/>
 <!-- +V -->
 <path d="M684.3 77.8 H687 V82 H691.1 V84.7 H687 V89 H684.3 V84.7 H680.2 V82 H684.3Z" fill="#d81e2a"/>
 <path d="M691 74.4 H695.3 L698.2 86.5 L701 74.4 H705.2 L700.3 91.6 H696Z" fill="#000"/>
 <!-- ++V -->
 <path d="M716.3 77.8 H719 V82 H723.1 V84.7 H719 V89 H716.3 V84.7 H712.5 V82 H716.3Z" fill="#d81e2a"/>
 <path d="M721.3 77.8 H724 V82 H727 V84.7 H724 V89 H721.3 V84.7 H717.5 V82 H721.3Z" fill="#d81e2a"/>
 <path d="M724 74.4 H728.3 L731.2 86.5 L734 74.4 H738.2 L733.3 91.6 H729Z" fill="#000"/>
 <!-- spinbox -->
 <rect x="742.5" y="74.5" width="25" height="15.5" fill="#fff" stroke="#9a9a9a" stroke-width="1"/>
 <rect x="758" y="75" width="9" height="7" fill="#ececec"/><rect x="758" y="82.5" width="9" height="7" fill="#ececec"/>
 <path d="M759.5 80 L762.3 77 L765.1 80Z M759.5 84 L762.3 87 L765.1 84Z" fill="#000"/>
 <text x="744.5" y="87" font-family="Liberation Sans" font-size="11" fill="#1a2a90">1</text>
 <!-- lock -->
 <defs>
  <linearGradient id="lk" x1="0" x2="1"><stop offset="0" stop-color="#c8a878"/><stop offset=".45" stop-color="#f4e6cc"/><stop offset="1" stop-color="#c09868"/></linearGradient>
  <linearGradient id="bt" x1="0" y1="0" x2="0" y2="1"><stop offset="0" stop-color="#f8f8f8"/><stop offset=".45" stop-color="#e8e8f0"/><stop offset=".5" stop-color="#8c96e8"/><stop offset="1" stop-color="#5a66c8"/></linearGradient>
 </defs>
 <path d="M780.5 83 V79 C780.5 72 793 72 793 79 V83" fill="none" stroke="#9a9aa0" stroke-width="2.2"/>
 <rect x="778" y="82.5" width="17.3" height="11.8" rx="1" fill="url(#lk)" stroke="#b89868" stroke-width=".6"/>
 <!-- notes -->
 <path d="M814.5 74 H829 L832.5 77 V93 H814.5Z" fill="#eee" stroke="#666" stroke-width="1.2"/>
 <g fill="#999"><rect x="817" y="80" width="12" height=".9"/><rect x="817" y="83" width="12" height=".9"/><rect x="817" y="86" width="12" height=".9"/><rect x="817" y="89" width="12" height=".9"/></g>
 <path d="M817 73 H821.3 V81.5 L819.2 79.7 L817 81.5Z" fill="#d8382a"/>
 <path d="M831.5 79 L823.5 88" stroke="#e8a020" stroke-width="2"/>
 <path d="M823.5 88 L822.6 89.5" stroke="#333" stroke-width="1.4"/>
 <!-- minus -->
 <rect x="851.6" y="80.8" width="11.3" height="3.3" fill="#d01820"/>
 <!-- engine chip + battery -->
 <rect x="883.5" y="77.5" width="10" height="13.5" fill="#5a564e" stroke="#111" stroke-width="1.2"/>
 <rect x="881.6" y="81" width="2.5" height="7" fill="#222"/>
 <rect x="886" y="82" width="5" height="5" fill="#bdbab2"/>
 <g fill="#e0b040"><rect x="885" y="76.5" width="1" height="1.5"/><rect x="887.5" y="76.5" width="1" height="1.5"/><rect x="890" y="76.5" width="1" height="1.5"/><rect x="885" y="90.5" width="1" height="1.5"/><rect x="887.5" y="90.5" width="1" height="1.5"/><rect x="890" y="90.5" width="1" height="1.5"/></g>
 <rect x="895.8" y="75.5" width="7" height="17.3" rx="1" fill="url(#bt)" stroke="#222" stroke-width="1.1"/>
 <!-- info -->
 <circle cx="927.6" cy="76.2" r="2.6" fill="#3a6ee6"/>
 <rect x="925.6" y="81.2" width="4.4" height="11.8" rx="1" fill="#3a6ee6"/>
 <path d="M937.6 81.2 L940 83.3 L937.6 85.4 M941 81.2 L943.4 83.3 L941 85.4" fill="none" stroke="#000" stroke-width="1.4"/>
</svg>

</body></html>
